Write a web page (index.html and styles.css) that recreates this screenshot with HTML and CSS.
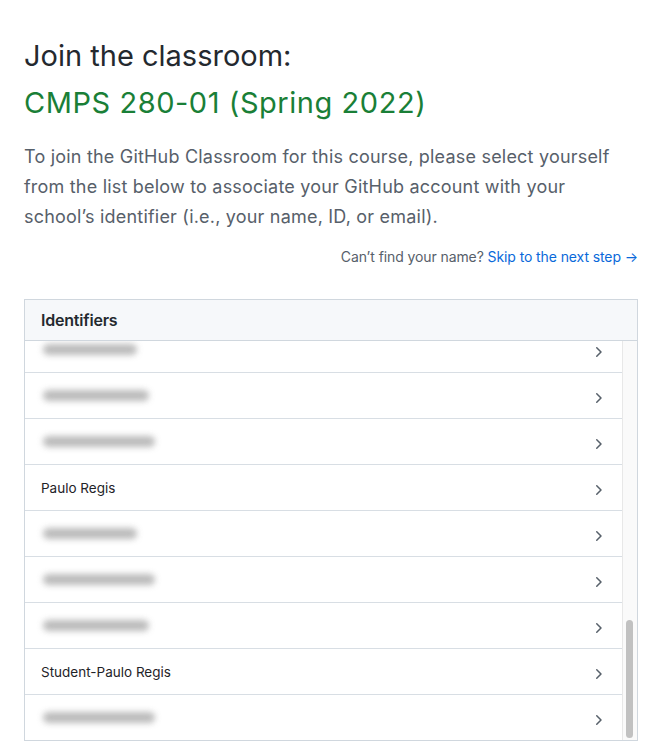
FILE: index.html
```html
<!DOCTYPE html>
<html lang="en">
<head>
<meta charset="utf-8">
<title>Join the classroom</title>
<link rel="stylesheet" href="styles.css">
</head>
<body>
<main class="page">
  <h1 class="title">Join the classroom:</h1>
  <h2 class="course">CMPS 280-01 (Spring 2022)</h2>
  <p class="lead">To join the GitHub Classroom for this course, please select yourself from the list below to associate your GitHub account with your school’s identifier (i.e., your name, ID, or email).</p>
  <p class="skip">Can’t find your name? <a href="#" class="skip-link">Skip to the next step →</a></p>

  <section class="box">
    <div class="box-header">Identifiers</div>
    <div class="box-body">
      <div class="viewport">
        <ul class="rows">
          <li class="row"><span class="blur w1"></span><svg class="chev" viewBox="0 0 16 16"><path d="M6.22 3.22a.75.75 0 0 1 1.06 0l4.25 4.25a.75.75 0 0 1 0 1.06l-4.25 4.25a.75.75 0 0 1-1.06-1.06L9.94 8 6.22 4.28a.75.75 0 0 1 0-1.06Z"/></svg></li>
          <li class="row"><span class="blur w2"></span><svg class="chev" viewBox="0 0 16 16"><path d="M6.22 3.22a.75.75 0 0 1 1.06 0l4.25 4.25a.75.75 0 0 1 0 1.06l-4.25 4.25a.75.75 0 0 1-1.06-1.06L9.94 8 6.22 4.28a.75.75 0 0 1 0-1.06Z"/></svg></li>
          <li class="row"><span class="blur w3"></span><svg class="chev" viewBox="0 0 16 16"><path d="M6.22 3.22a.75.75 0 0 1 1.06 0l4.25 4.25a.75.75 0 0 1 0 1.06l-4.25 4.25a.75.75 0 0 1-1.06-1.06L9.94 8 6.22 4.28a.75.75 0 0 1 0-1.06Z"/></svg></li>
          <li class="row"><span class="blur w1"></span><svg class="chev" viewBox="0 0 16 16"><path d="M6.22 3.22a.75.75 0 0 1 1.06 0l4.25 4.25a.75.75 0 0 1 0 1.06l-4.25 4.25a.75.75 0 0 1-1.06-1.06L9.94 8 6.22 4.28a.75.75 0 0 1 0-1.06Z"/></svg></li>
          <li class="row"><span class="blur w2"></span><svg class="chev" viewBox="0 0 16 16"><path d="M6.22 3.22a.75.75 0 0 1 1.06 0l4.25 4.25a.75.75 0 0 1 0 1.06l-4.25 4.25a.75.75 0 0 1-1.06-1.06L9.94 8 6.22 4.28a.75.75 0 0 1 0-1.06Z"/></svg></li>
          <li class="row"><span class="blur w3"></span><svg class="chev" viewBox="0 0 16 16"><path d="M6.22 3.22a.75.75 0 0 1 1.06 0l4.25 4.25a.75.75 0 0 1 0 1.06l-4.25 4.25a.75.75 0 0 1-1.06-1.06L9.94 8 6.22 4.28a.75.75 0 0 1 0-1.06Z"/></svg></li>
          <li class="row"><span class="blur w1"></span><svg class="chev" viewBox="0 0 16 16"><path d="M6.22 3.22a.75.75 0 0 1 1.06 0l4.25 4.25a.75.75 0 0 1 0 1.06l-4.25 4.25a.75.75 0 0 1-1.06-1.06L9.94 8 6.22 4.28a.75.75 0 0 1 0-1.06Z"/></svg></li>
          <li class="row"><span class="blur w2"></span><svg class="chev" viewBox="0 0 16 16"><path d="M6.22 3.22a.75.75 0 0 1 1.06 0l4.25 4.25a.75.75 0 0 1 0 1.06l-4.25 4.25a.75.75 0 0 1-1.06-1.06L9.94 8 6.22 4.28a.75.75 0 0 1 0-1.06Z"/></svg></li>
          <li class="row"><span class="blur w3"></span><svg class="chev" viewBox="0 0 16 16"><path d="M6.22 3.22a.75.75 0 0 1 1.06 0l4.25 4.25a.75.75 0 0 1 0 1.06l-4.25 4.25a.75.75 0 0 1-1.06-1.06L9.94 8 6.22 4.28a.75.75 0 0 1 0-1.06Z"/></svg></li>
          <li class="row"><span class="blur w1"></span><svg class="chev" viewBox="0 0 16 16"><path d="M6.22 3.22a.75.75 0 0 1 1.06 0l4.25 4.25a.75.75 0 0 1 0 1.06l-4.25 4.25a.75.75 0 0 1-1.06-1.06L9.94 8 6.22 4.28a.75.75 0 0 1 0-1.06Z"/></svg></li>
          <li class="row"><span class="blur w2"></span><svg class="chev" viewBox="0 0 16 16"><path d="M6.22 3.22a.75.75 0 0 1 1.06 0l4.25 4.25a.75.75 0 0 1 0 1.06l-4.25 4.25a.75.75 0 0 1-1.06-1.06L9.94 8 6.22 4.28a.75.75 0 0 1 0-1.06Z"/></svg></li>
          <li class="row"><span class="blur w3"></span><svg class="chev" viewBox="0 0 16 16"><path d="M6.22 3.22a.75.75 0 0 1 1.06 0l4.25 4.25a.75.75 0 0 1 0 1.06l-4.25 4.25a.75.75 0 0 1-1.06-1.06L9.94 8 6.22 4.28a.75.75 0 0 1 0-1.06Z"/></svg></li>
          <li class="row"><span class="blur w1"></span><svg class="chev" viewBox="0 0 16 16"><path d="M6.22 3.22a.75.75 0 0 1 1.06 0l4.25 4.25a.75.75 0 0 1 0 1.06l-4.25 4.25a.75.75 0 0 1-1.06-1.06L9.94 8 6.22 4.28a.75.75 0 0 1 0-1.06Z"/></svg></li>
          <li class="row"><span class="blur w2"></span><svg class="chev" viewBox="0 0 16 16"><path d="M6.22 3.22a.75.75 0 0 1 1.06 0l4.25 4.25a.75.75 0 0 1 0 1.06l-4.25 4.25a.75.75 0 0 1-1.06-1.06L9.94 8 6.22 4.28a.75.75 0 0 1 0-1.06Z"/></svg></li>
          <li class="row"><span class="blur w3"></span><svg class="chev" viewBox="0 0 16 16"><path d="M6.22 3.22a.75.75 0 0 1 1.06 0l4.25 4.25a.75.75 0 0 1 0 1.06l-4.25 4.25a.75.75 0 0 1-1.06-1.06L9.94 8 6.22 4.28a.75.75 0 0 1 0-1.06Z"/></svg></li>
          <li class="row"><span class="blur w1"></span><svg class="chev" viewBox="0 0 16 16"><path d="M6.22 3.22a.75.75 0 0 1 1.06 0l4.25 4.25a.75.75 0 0 1 0 1.06l-4.25 4.25a.75.75 0 0 1-1.06-1.06L9.94 8 6.22 4.28a.75.75 0 0 1 0-1.06Z"/></svg></li>
          <li class="row"><span class="blur w2"></span><svg class="chev" viewBox="0 0 16 16"><path d="M6.22 3.22a.75.75 0 0 1 1.06 0l4.25 4.25a.75.75 0 0 1 0 1.06l-4.25 4.25a.75.75 0 0 1-1.06-1.06L9.94 8 6.22 4.28a.75.75 0 0 1 0-1.06Z"/></svg></li>
          <li class="row"><span class="blur w3"></span><svg class="chev" viewBox="0 0 16 16"><path d="M6.22 3.22a.75.75 0 0 1 1.06 0l4.25 4.25a.75.75 0 0 1 0 1.06l-4.25 4.25a.75.75 0 0 1-1.06-1.06L9.94 8 6.22 4.28a.75.75 0 0 1 0-1.06Z"/></svg></li>
          <li class="row"><span class="blur w1"></span><svg class="chev" viewBox="0 0 16 16"><path d="M6.22 3.22a.75.75 0 0 1 1.06 0l4.25 4.25a.75.75 0 0 1 0 1.06l-4.25 4.25a.75.75 0 0 1-1.06-1.06L9.94 8 6.22 4.28a.75.75 0 0 1 0-1.06Z"/></svg></li>
          <li class="row"><span class="blur w2"></span><svg class="chev" viewBox="0 0 16 16"><path d="M6.22 3.22a.75.75 0 0 1 1.06 0l4.25 4.25a.75.75 0 0 1 0 1.06l-4.25 4.25a.75.75 0 0 1-1.06-1.06L9.94 8 6.22 4.28a.75.75 0 0 1 0-1.06Z"/></svg></li>
          <li class="row"><span class="blur w4"></span><svg class="chev" viewBox="0 0 16 16"><path d="M6.22 3.22a.75.75 0 0 1 1.06 0l4.25 4.25a.75.75 0 0 1 0 1.06l-4.25 4.25a.75.75 0 0 1-1.06-1.06L9.94 8 6.22 4.28a.75.75 0 0 1 0-1.06Z"/></svg></li>
          <li class="row"><span class="blur w5"></span><svg class="chev" viewBox="0 0 16 16"><path d="M6.22 3.22a.75.75 0 0 1 1.06 0l4.25 4.25a.75.75 0 0 1 0 1.06l-4.25 4.25a.75.75 0 0 1-1.06-1.06L9.94 8 6.22 4.28a.75.75 0 0 1 0-1.06Z"/></svg></li>
          <li class="row"><span class="blur w6"></span><svg class="chev" viewBox="0 0 16 16"><path d="M6.22 3.22a.75.75 0 0 1 1.06 0l4.25 4.25a.75.75 0 0 1 0 1.06l-4.25 4.25a.75.75 0 0 1-1.06-1.06L9.94 8 6.22 4.28a.75.75 0 0 1 0-1.06Z"/></svg></li>
          <li class="row"><span class="name">Paulo Regis</span><svg class="chev" viewBox="0 0 16 16"><path d="M6.22 3.22a.75.75 0 0 1 1.06 0l4.25 4.25a.75.75 0 0 1 0 1.06l-4.25 4.25a.75.75 0 0 1-1.06-1.06L9.94 8 6.22 4.28a.75.75 0 0 1 0-1.06Z"/></svg></li>
          <li class="row"><span class="blur w4"></span><svg class="chev" viewBox="0 0 16 16"><path d="M6.22 3.22a.75.75 0 0 1 1.06 0l4.25 4.25a.75.75 0 0 1 0 1.06l-4.25 4.25a.75.75 0 0 1-1.06-1.06L9.94 8 6.22 4.28a.75.75 0 0 1 0-1.06Z"/></svg></li>
          <li class="row"><span class="blur w6"></span><svg class="chev" viewBox="0 0 16 16"><path d="M6.22 3.22a.75.75 0 0 1 1.06 0l4.25 4.25a.75.75 0 0 1 0 1.06l-4.25 4.25a.75.75 0 0 1-1.06-1.06L9.94 8 6.22 4.28a.75.75 0 0 1 0-1.06Z"/></svg></li>
          <li class="row"><span class="blur w5"></span><svg class="chev" viewBox="0 0 16 16"><path d="M6.22 3.22a.75.75 0 0 1 1.06 0l4.25 4.25a.75.75 0 0 1 0 1.06l-4.25 4.25a.75.75 0 0 1-1.06-1.06L9.94 8 6.22 4.28a.75.75 0 0 1 0-1.06Z"/></svg></li>
          <li class="row"><span class="name">Student-Paulo Regis</span><svg class="chev" viewBox="0 0 16 16"><path d="M6.22 3.22a.75.75 0 0 1 1.06 0l4.25 4.25a.75.75 0 0 1 0 1.06l-4.25 4.25a.75.75 0 0 1-1.06-1.06L9.94 8 6.22 4.28a.75.75 0 0 1 0-1.06Z"/></svg></li>
          <li class="row"><span class="blur w6"></span><svg class="chev" viewBox="0 0 16 16"><path d="M6.22 3.22a.75.75 0 0 1 1.06 0l4.25 4.25a.75.75 0 0 1 0 1.06l-4.25 4.25a.75.75 0 0 1-1.06-1.06L9.94 8 6.22 4.28a.75.75 0 0 1 0-1.06Z"/></svg></li>
        </ul>
      </div>
      <div class="track"><div class="thumb"></div></div>
    </div>
  </section>
</main>
</body>
</html>
```
FILE: styles.css
```css
* { box-sizing: border-box; }

html, body {
  margin: 0;
  padding: 0;
  background: #ffffff;
}

body {
  font-family: Inter, "Liberation Sans", sans-serif;
  color: #24292f;
}

.page {
  padding: 24px 17px 0 24px;
  width: 655px;
}

.title {
  margin: 14px 0 0;
  font-size: 29px;
  font-weight: 400;
  line-height: 36px;
  color: #24292f;
  letter-spacing: 0;
}

.course {
  margin: 11px 0 0;
  font-size: 29px;
  font-weight: 400;
  line-height: 36px;
  color: #1a7f37;
  letter-spacing: 0.55px;
}

.lead {
  margin: 21px 0 0;
  max-width: 600px;
  font-size: 18px;
  line-height: 30px;
  color: #57606a;
  letter-spacing: 0.2px;
}

.skip {
  margin: 15px 0 0;
  text-align: right;
  font-size: 14px;
  line-height: 20px;
  color: #57606a;
  letter-spacing: -0.1px;
}

.skip-link {
  color: #0969da;
  text-decoration: none;
}

.box {
  margin-top: 32px;
  border: 1px solid #d0d7de;
}

.box-header {
  height: 41px;
  padding: 0 16px;
  display: flex;
  align-items: center;
  background: #f6f8fa;
  border-bottom: 1px solid #d0d7de;
  font-size: 16px;
  font-weight: 600;
  color: #24292f;
  letter-spacing: -0.2px;
}

.box-body {
  display: flex;
  height: 399px;
}

.viewport {
  flex: 1;
  overflow: hidden;
  display: flex;
  flex-direction: column-reverse;
}

.track {
  width: 15px;
  flex: none;
  background: #fafafa;
  border-left: 1px solid #e8e8e8;
  display: flex;
  flex-direction: column;
  justify-content: flex-end;
  padding: 2px 4px 2px 3px;
}

.thumb {
  height: 118px;
  border-radius: 4px;
  background: #c1c1c1;
}

.rows {
  list-style: none;
  margin: 0;
  padding: 0;
}

.row {
  height: 46px;
  padding: 0 16px;
  display: flex;
  align-items: center;
  justify-content: space-between;
  border-bottom: 1px solid #d8dee4;
}

.row:last-child {
  height: 45px;
  border-bottom: 0;
}

.name {
  font-size: 13.5px;
  color: #1f2328;
  padding-top: 1px;
}

.chev {
  width: 16px;
  height: 16px;
  fill: #57606a;
  margin-top: 4px;
}

.blur {
  display: block;
  height: 11px;
  border-radius: 7px;
  background: #b4b4b4;
  filter: blur(3px);
  opacity: 0.9;
}

.w1 { width: 96px; margin-left: 6px; }
.w2 { width: 100px; margin-left: 0; }
.w3 { width: 112px; margin-left: 0; }
.w4 { width: 94px; margin-left: 2px; }
.w5 { width: 106px; margin-left: 2px; }
.w6 { width: 112px; margin-left: 2px; }
```
